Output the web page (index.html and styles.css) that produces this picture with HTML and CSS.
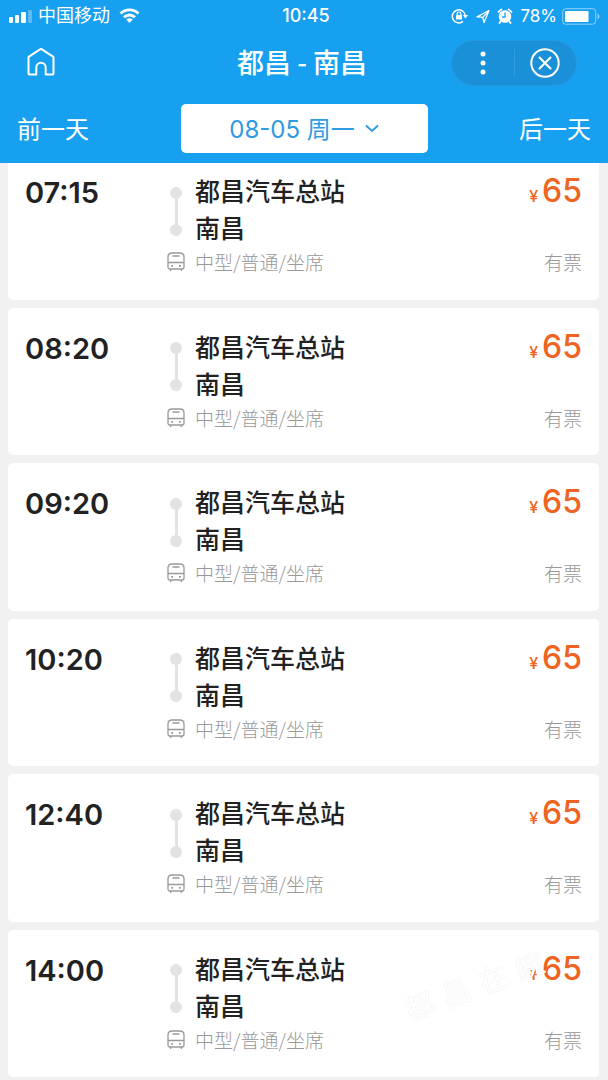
FILE: index.html
```html
<!DOCTYPE html>
<html lang="zh-CN">

<head>
    <meta charset="UTF-8" />
    <meta name="viewport" content="width=device-width, initial-scale=1" />
    <title>都昌 - 南昌</title>
    <link rel="stylesheet" href="styles.css">
</head>

<body>
    <svg class="sprite" aria-hidden="true">
        <symbol id="icon-bus" viewBox="0 0 18 20">
            <path d="M5 1h8q4 0 4 4v10q0 2-2 2H3q-2 0-2-2V5q0-4 4-4zM1 10.500h16M5.500 4h7M3 17l1 2M15 17l-1 2" />
            <path d="M4.200 13.800h1.800M12 13.800h1.800" stroke-width="1.800" />
        </symbol>
    </svg>

    <header class="header">
        <div class="status-bar">
            <div class="status-left">
                <svg width="24" height="13" viewBox="0 0 24 13" fill="#fff">
                    <rect x="0" y="7" width="4" height="6" rx="1" />
                    <rect x="6" y="5" width="4" height="8" rx="1" />
                    <rect x="12" y="2" width="5" height="11" rx="1" />
                    <rect x="19" y="0" width="4" height="13" rx="1" opacity=".3" />
                </svg>
                <span class="carrier">中国移动</span>
                <svg class="wifi" width="21" height="16" viewBox="0 0 21 16" fill="none" stroke="#fff" stroke-width="2.800">
                    <path d="M1.500 5.500a13 13 0 0 1 18 0M5 9.200a8 8 0 0 1 11 0" />
                    <path d="M7.200 11.600a5 5 0 0 1 6.600 0L10.500 15z" fill="#fff" stroke="none" />
                </svg>
            </div>
            <time class="clock">10:45</time>
            <div class="status-right">
                <svg width="18" height="16" viewBox="0 0 18 16" fill="none" stroke="#fff" stroke-width="1.500">
                    <path d="M12 13.400A6.500 6.500 0 1 1 14.300 7.500" />
                    <path d="M11.800 7h5.200l-2.600 3.500z" fill="#fff" stroke="none" />
                    <rect x="5" y="7" width="6" height="4.500" rx=".5" fill="#fff" stroke="none" />
                    <path d="M6.200 7V5.800a1.800 1.800 0 0 1 3.600 0V7" stroke-width="1.200" />
                </svg>
                <svg width="14" height="15" viewBox="0 0 14 15" fill="none" stroke="#fff" stroke-width="1.300" stroke-linejoin="round">
                    <path d="M13 1.500L1 7.800l5.800.6L8 13.500z" />
                    <path d="M13 1.500L6.800 8.400" />
                </svg>
                <svg width="16" height="16" viewBox="0 0 16 16" fill="none" stroke="#fff" stroke-linecap="round">
                    <circle cx="8" cy="8.500" r="6.300" fill="#fff" stroke="none" />
                    <path d="M1.500 4a7 7 0 0 1 3-2.500M14.500 4a7 7 0 0 0-3-2.500M3.500 13.500L2.500 15M12.500 13.500l1 1.500" stroke-width="1.800" />
                    <path d="M8 5v4H5.500" stroke="#18a0f0" stroke-width="1.300" />
                </svg>
                <span class="percent">78%</span>
                <svg width="38" height="17" viewBox="0 0 38 17" fill="#fff">
                    <rect x=".7" y=".7" width="33" height="15.500" rx="3" fill="none" stroke="#fff" opacity=".5" />
                    <rect x="3" y="3" width="23.500" height="11" rx="1" />
                    <path d="M35.500 5.500q2 1 2 3t-2 3z" opacity=".5" />
                </svg>
            </div>
        </div>

        <div class="title-bar">
            <button class="home" type="button" aria-label="首页">
                <svg width="28" height="28" viewBox="0 0 28 28" fill="none" stroke="#fff" stroke-width="2" stroke-linejoin="round">
                    <path d="M1.500 9.500Q1.500 9 2 8.600L13.400 1.200q.6-.4 1.200 0L26 8.600q.5.400.5 1V25.500q0 1-1 1H18.700V19.500a4.500 4.500 0 0 0-9.400 0V26.500H2.500q-1 0-1-1z" />
                </svg>
            </button>
            <h1>都昌 - 南昌</h1>
            <div class="capsule">
                <button type="button" aria-label="更多">
                    <svg width="6" height="24" viewBox="0 0 6 24" fill="#fff">
                        <circle cx="3" cy="3" r="2.500" />
                        <circle cx="3" cy="12" r="2.500" />
                        <circle cx="3" cy="21" r="2.500" />
                    </svg>
                </button>
                <button type="button" aria-label="关闭">
                    <svg width="30" height="30" viewBox="0 0 30 30" fill="none" stroke="#fff" stroke-width="2" stroke-linecap="round">
                        <circle cx="15" cy="15" r="13.700" />
                        <path d="M9.500 9.500l11 11M20.500 9.500l-11 11" />
                    </svg>
                </button>
            </div>
        </div>

        <nav class="day-bar">
            <button class="day" type="button">前一天</button>
            <button class="date" type="button">
                <span>08-05 周一</span>
                <svg width="14" height="9" viewBox="0 0 14 9" fill="none" stroke="#2f9be0" stroke-width="2">
                    <path d="M1 1.500l6 5.500 6-5.500" />
                </svg>
            </button>
            <button class="day next" type="button">后一天</button>
        </nav>
    </header>

    <main class="list">
        <article class="card">
            <time class="depart">07:15</time>
            <div class="route">
                <span class="line"></span>
                <div class="stations"><p>都昌汽车总站</p><p>南昌</p></div>
                <svg class="bus"><use href="#icon-bus" /></svg>
                <p class="type">中型/普通/坐席</p>
            </div>
            <div class="fare">
                <p class="price"><small>¥</small>65</p>
                <p class="stock">有票</p>
            </div>
        </article>
        <article class="card">
            <time class="depart">08:20</time>
            <div class="route">
                <span class="line"></span>
                <div class="stations"><p>都昌汽车总站</p><p>南昌</p></div>
                <svg class="bus"><use href="#icon-bus" /></svg>
                <p class="type">中型/普通/坐席</p>
            </div>
            <div class="fare">
                <p class="price"><small>¥</small>65</p>
                <p class="stock">有票</p>
            </div>
        </article>
        <article class="card">
            <time class="depart">09:20</time>
            <div class="route">
                <span class="line"></span>
                <div class="stations"><p>都昌汽车总站</p><p>南昌</p></div>
                <svg class="bus"><use href="#icon-bus" /></svg>
                <p class="type">中型/普通/坐席</p>
            </div>
            <div class="fare">
                <p class="price"><small>¥</small>65</p>
                <p class="stock">有票</p>
            </div>
        </article>
        <article class="card">
            <time class="depart">10:20</time>
            <div class="route">
                <span class="line"></span>
                <div class="stations"><p>都昌汽车总站</p><p>南昌</p></div>
                <svg class="bus"><use href="#icon-bus" /></svg>
                <p class="type">中型/普通/坐席</p>
            </div>
            <div class="fare">
                <p class="price"><small>¥</small>65</p>
                <p class="stock">有票</p>
            </div>
        </article>
        <article class="card">
            <time class="depart">12:40</time>
            <div class="route">
                <span class="line"></span>
                <div class="stations"><p>都昌汽车总站</p><p>南昌</p></div>
                <svg class="bus"><use href="#icon-bus" /></svg>
                <p class="type">中型/普通/坐席</p>
            </div>
            <div class="fare">
                <p class="price"><small>¥</small>65</p>
                <p class="stock">有票</p>
            </div>
        </article>
        <article class="card">
            <time class="depart">14:00</time>
            <div class="route">
                <span class="line"></span>
                <div class="stations"><p>都昌汽车总站</p><p>南昌</p></div>
                <svg class="bus"><use href="#icon-bus" /></svg>
                <p class="type">中型/普通/坐席</p>
            </div>
            <div class="fare">
                <p class="price"><small>¥</small>65</p>
                <p class="stock">有票</p>
            </div>
            <div class="watermark"><span>都</span><span>昌</span><span>在</span><span>線</span></div>
        </article>
    </main>
</body>

</html>
```

FILE: styles.css
```css
* {
    box-sizing: border-box;
}

body {
    margin: 0;
    min-height: 100vh;
    display: flex;
    flex-direction: column;
    background: #f1f1f1;
    color: #222;
    font-family: Inter, "Noto Sans CJK SC", sans-serif;
}

h1,
p {
    margin: 0;
}

button {
    padding: 0;
    border: none;
    background: none;
    color: inherit;
    font: inherit;
    cursor: pointer;
}

svg {
    display: block;
    flex: none;
}

.sprite {
    position: absolute;
    width: 0;
    height: 0;
}

/* Header */
.header {
    position: sticky;
    top: 0;
    z-index: 1;
    height: 163px;
    background: #18a0f0;
    color: #fff;
}

.status-bar,
.title-bar,
.day-bar {
    display: grid;
    grid-template-columns: 1fr auto 1fr;
    align-items: center;
}

.status-bar {
    height: 32px;
    padding: 0 8px 0 9px;
    font-size: 18px;
    line-height: 32px;
}

.status-left,
.status-right {
    display: flex;
    align-items: center;
    gap: 7px;
}

.status-left {
    gap: 5px;
}

.status-right {
    justify-content: flex-end;
}

.wifi {
    margin-left: 4px;
}

.clock {
    padding-left: 3px;
    font-weight: 500;
}

.percent {
    margin-right: -2px;
    font-size: 17px;
}

.title-bar {
    height: 62px;
    padding: 0 31px 0 27px;
}

.title-bar h1 {
    padding-bottom: 3px;
    font-family: "Noto Sans CJK SC", sans-serif;
    font-size: 27px;
    font-weight: 500;
    line-height: 32px;
}

.home {
    justify-self: start;
    padding-bottom: 3px;
}

.capsule {
    justify-self: end;
    display: flex;
    align-items: center;
    width: 126px;
    height: 46px;
    border: 1px solid #2799df;
    border-radius: 23px;
    background: #1990d8;
}

.capsule button {
    flex: 1;
    height: 28px;
    display: flex;
    align-items: center;
    justify-content: center;
}

.capsule button + button {
    border-left: 1px solid #2f9be0;
}

.day-bar {
    padding: 10px 17px 0;
    font-size: 24px;
}

.day {
    justify-self: start;
    padding-bottom: 3px;
}

.next {
    justify-self: end;
}

.date {
    display: flex;
    align-items: center;
    justify-content: center;
    gap: 10px;
    width: 247px;
    height: 49px;
    border-radius: 5px;
    background: #fff;
    color: #2f9be0;
}

.date span {
    padding-bottom: 3px;
}

/* Trip list, the first card slides under the header */
.list {
    flex: 1;
    display: flex;
    flex-direction: column;
    gap: 8px;
    margin-top: -11px;
    padding: 0 9px 3px 8px;
}

.card {
    position: relative;
    flex: 1 0 auto;
    display: grid;
    grid-template-columns: 141px 1fr auto;
    padding: 22px 17px 16px;
    border-radius: 5px;
    background: #fff;
}

.depart {
    font-size: 29px;
    font-weight: 600;
    line-height: 38px;
}

.route {
    display: grid;
    grid-template-columns: 20px 1fr;
    column-gap: 9px;
    align-content: start;
    justify-items: center;
    align-items: center;
}

.line {
    display: flex;
    flex-direction: column;
    align-items: center;
    width: 3px;
    height: 49px;
    background: #e3e3e3;
    justify-content: space-between;
}

.line::before,
.line::after {
    content: "";
    width: 12px;
    height: 12px;
    border-radius: 50%;
    background: #e3e3e3;
}

.stations {
    justify-self: start;
    font-size: 25px;
    font-weight: 500;
    line-height: 37px;
}

.bus {
    width: 18px;
    height: 20px;
    fill: none;
    stroke: #999;
    stroke-width: 1.3;
}

.type,
.stock {
    color: #999;
    font-family: "Noto Sans CJK SC", sans-serif;
    font-size: 19px;
    font-weight: 300;
    line-height: 28px;
}

.type {
    justify-self: start;
}

.fare {
    text-align: right;
}

.price {
    height: 74px;
    color: #ee6420;
    font-size: 32px;
    font-weight: 500;
    line-height: 34px;
}

.price small {
    margin-right: 4px;
    font-size: 16px;
}

.watermark {
    position: absolute;
    right: 52px;
    bottom: 77px;
    display: flex;
    gap: 10px;
    color: #fff;
    font-family: "Noto Sans CJK SC", sans-serif;
    font-size: 29px;
    line-height: 32px;
    text-shadow: 0 0 1px #ddd;
    transform: rotate(-20deg);
    pointer-events: none;
}
```
